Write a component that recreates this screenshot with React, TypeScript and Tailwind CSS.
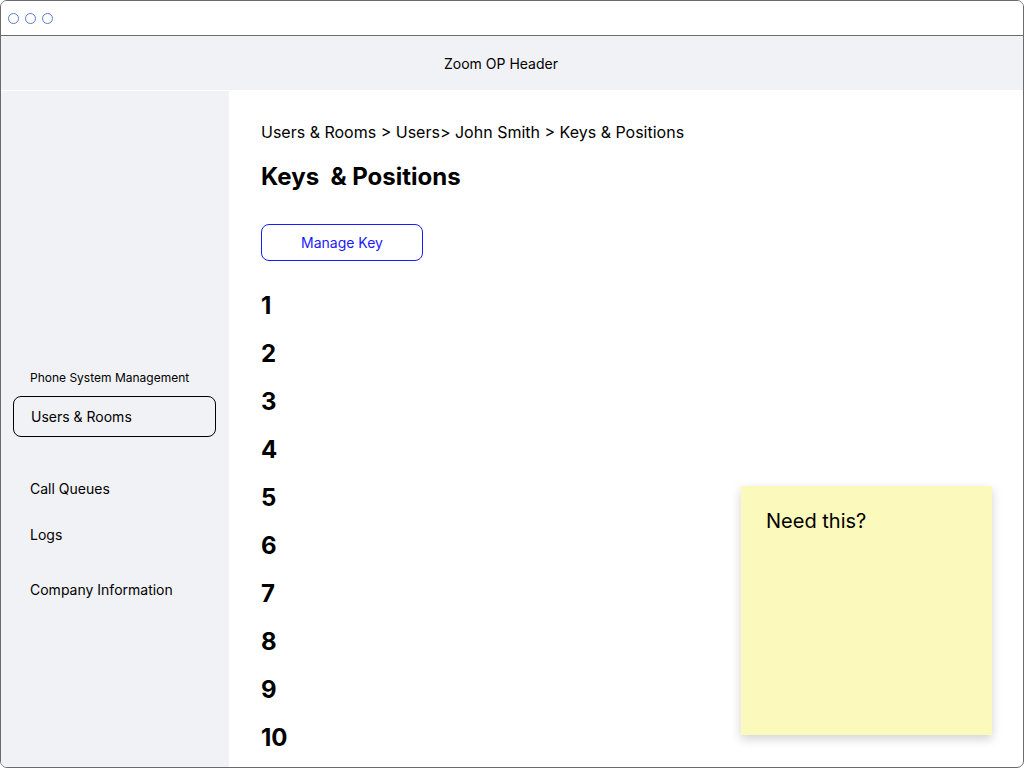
import React from 'react';

const navItems = [
  { label: 'Call Queues', gap: 'mt-[42px]' },
  { label: 'Logs', gap: 'mt-[26px]' },
  { label: 'Company Information', gap: 'mt-[35px]' },
];

const positions = [1, 2, 3, 4, 5, 6, 7, 8, 9, 10];

const App: React.FC = () => {
  return (
    <div className="w-[1024px] h-[768px] bg-white font-['Inter',sans-serif] text-black">
      <div className="flex flex-col h-full border border-[#6b6b6b] rounded-[7px] overflow-hidden">
        {/* Window chrome */}
        <div className="h-[35px] shrink-0 flex items-center gap-[6px] pl-[7px] border-b border-[#6b6b6b] bg-white">
          <span className="w-[11px] h-[11px] rounded-full border border-[#5b7bd0]" />
          <span className="w-[11px] h-[11px] rounded-full border border-[#5b7bd0]" />
          <span className="w-[11px] h-[11px] rounded-full border border-[#5b7bd0]" />
        </div>

        {/* Header */}
        <div className="h-[55px] shrink-0 flex items-center justify-center pr-[22px] bg-[#f1f2f5] border-b border-white text-[14px]">
          Zoom OP Header
        </div>

        <div className="flex flex-1 min-h-0">
          {/* Sidebar */}
          <aside className="w-[228px] shrink-0 bg-[#f1f2f5] pt-[279px] pl-[12px] pr-[12px]">
            <div className="pl-[17px] text-[12px] leading-4">Phone System Management</div>
            <div className="mt-[10px] h-[41px] w-[203px] flex items-center pl-[17px] border border-black rounded-lg text-[14px]">
              Users &amp; Rooms
            </div>
            {navItems.map((item) => (
              <div key={item.label} className={`${item.gap} pl-[17px] text-[14px] leading-5`}>
                {item.label}
              </div>
            ))}
          </aside>

          {/* Main */}
          <main className="relative flex-1 pt-[29px] pl-[32px]">
            <div className="text-[16px] leading-6">Users &amp; Rooms &gt; Users&gt; John Smith &gt; Keys &amp; Positions</div>
            <h1 className="mt-[17px] text-[24px] leading-8 font-bold whitespace-pre">Keys  &amp; Positions</h1>
            <button className="mt-[31px] w-[162px] h-[37px] rounded-lg border border-[#1a1aff] text-[#1a1aff] text-[14px]">
              Manage Key
            </button>
            <div className="mt-[29px] flex flex-col gap-4">
              {positions.map((n) => (
                <div key={n} className="text-[24px] leading-8 font-bold">{n}</div>
              ))}
            </div>

            {/* Sticky note */}
            <div className="absolute left-[512px] top-[395px] w-[251px] h-[249px] bg-[#fcf9bd] shadow-[0_4px_10px_rgba(0,0,0,0.18)] pt-[21px] pl-[25px] text-[20px] leading-7">
              Need this?
            </div>
          </main>
        </div>
      </div>
    </div>
  );
};

export default App;
